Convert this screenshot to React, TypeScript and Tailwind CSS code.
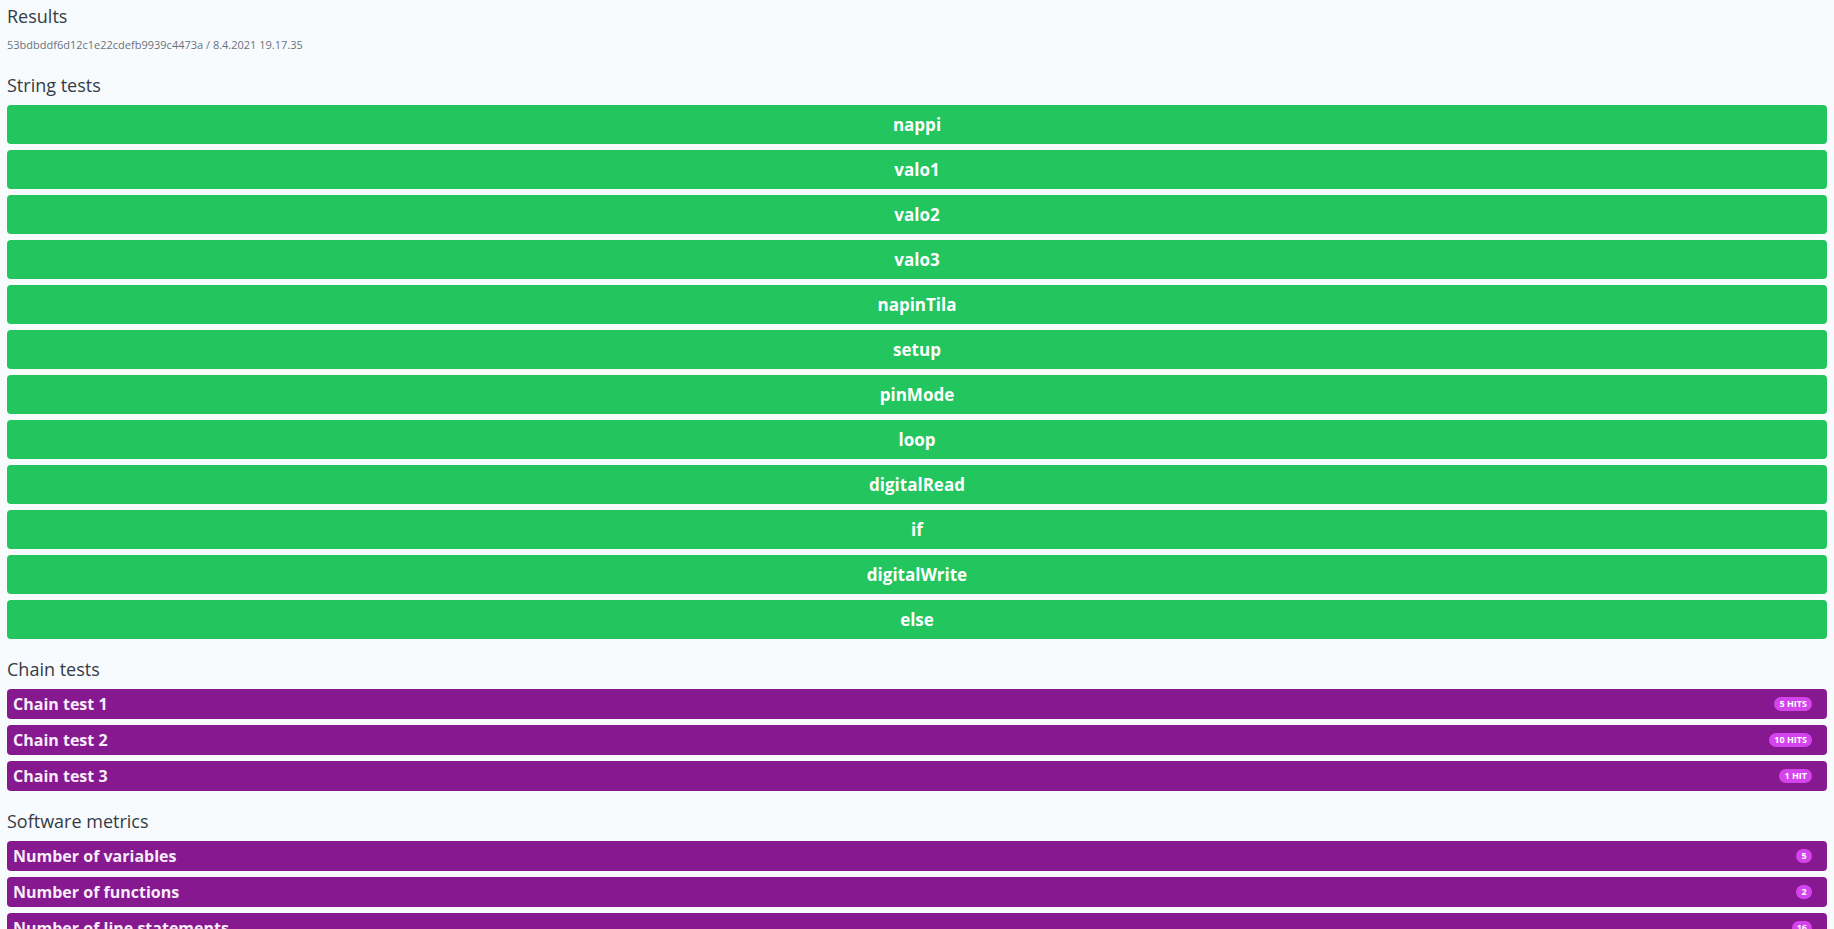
const stringTests = [
  "nappi",
  "valo1",
  "valo2",
  "valo3",
  "napinTila",
  "setup",
  "pinMode",
  "loop",
  "digitalRead",
  "if",
  "digitalWrite",
  "else",
];

const chainTests = [
  { name: "Chain test 1", hits: "5 hits" },
  { name: "Chain test 2", hits: "10 hits" },
  { name: "Chain test 3", hits: "1 hit" },
];

const metrics = [
  { name: "Number of variables", value: "5" },
  { name: "Number of functions", value: "2" },
  { name: "Number of line statements", value: "16" },
];

const Badge = ({ children }: { children: React.ReactNode }) => (
  <span className="min-w-[16px] h-[14px] px-[5px] rounded-full bg-[#d444ec] text-white text-[9px] font-bold uppercase leading-[14px] text-center">
    {children}
  </span>
);

const PurpleRow = ({ label, badge }: { label: string; badge: string }) => (
  <div className="h-[30px] flex items-center justify-between rounded-[4px] bg-[#86198f] pl-[6px] pr-[15px]">
    <span className="text-[#f7ecfb] text-[16px] font-bold leading-none">{label}</span>
    <Badge>{badge}</Badge>
  </div>
);

const App = () => {
  return (
    <div
      className="min-h-screen bg-[#f7fbfd] px-[7px] pt-[3px] text-[#343b45]"
      style={{ fontFamily: '"Open Sans", "Noto Sans", sans-serif' }}
    >
      <h1 className="text-[18px] leading-[27px]">Results</h1>
      <p className="mt-[7px] text-[11px] leading-[16px] text-[#6b7280]">
        53bdbddf6d12c1e22cdefb9939c4473a / 8.4.2021 19.17.35
      </p>

      {/* String tests */}
      <h2 className="mt-[19px] text-[18px] leading-[27px]">String tests</h2>
      <div className="mt-[6px] flex flex-col gap-[6px]">
        {stringTests.map((t) => (
          <div
            key={t}
            className="h-[39px] flex items-center justify-center rounded-[4px] bg-[#22c55e] text-white text-[17px] font-bold"
          >
            {t}
          </div>
        ))}
      </div>

      {/* Chain tests */}
      <h2 className="mt-[17px] text-[18px] leading-[27px]">Chain tests</h2>
      <div className="mt-[6px] flex flex-col gap-[6px]">
        {chainTests.map((c) => (
          <PurpleRow key={c.name} label={c.name} badge={c.hits} />
        ))}
      </div>

      {/* Software metrics */}
      <h2 className="mt-[17px] text-[18px] leading-[27px]">Software metrics</h2>
      <div className="mt-[6px] flex flex-col gap-[6px] pb-4">
        {metrics.map((m) => (
          <PurpleRow key={m.name} label={m.name} badge={m.value} />
        ))}
      </div>
    </div>
  );
};

export default App;
